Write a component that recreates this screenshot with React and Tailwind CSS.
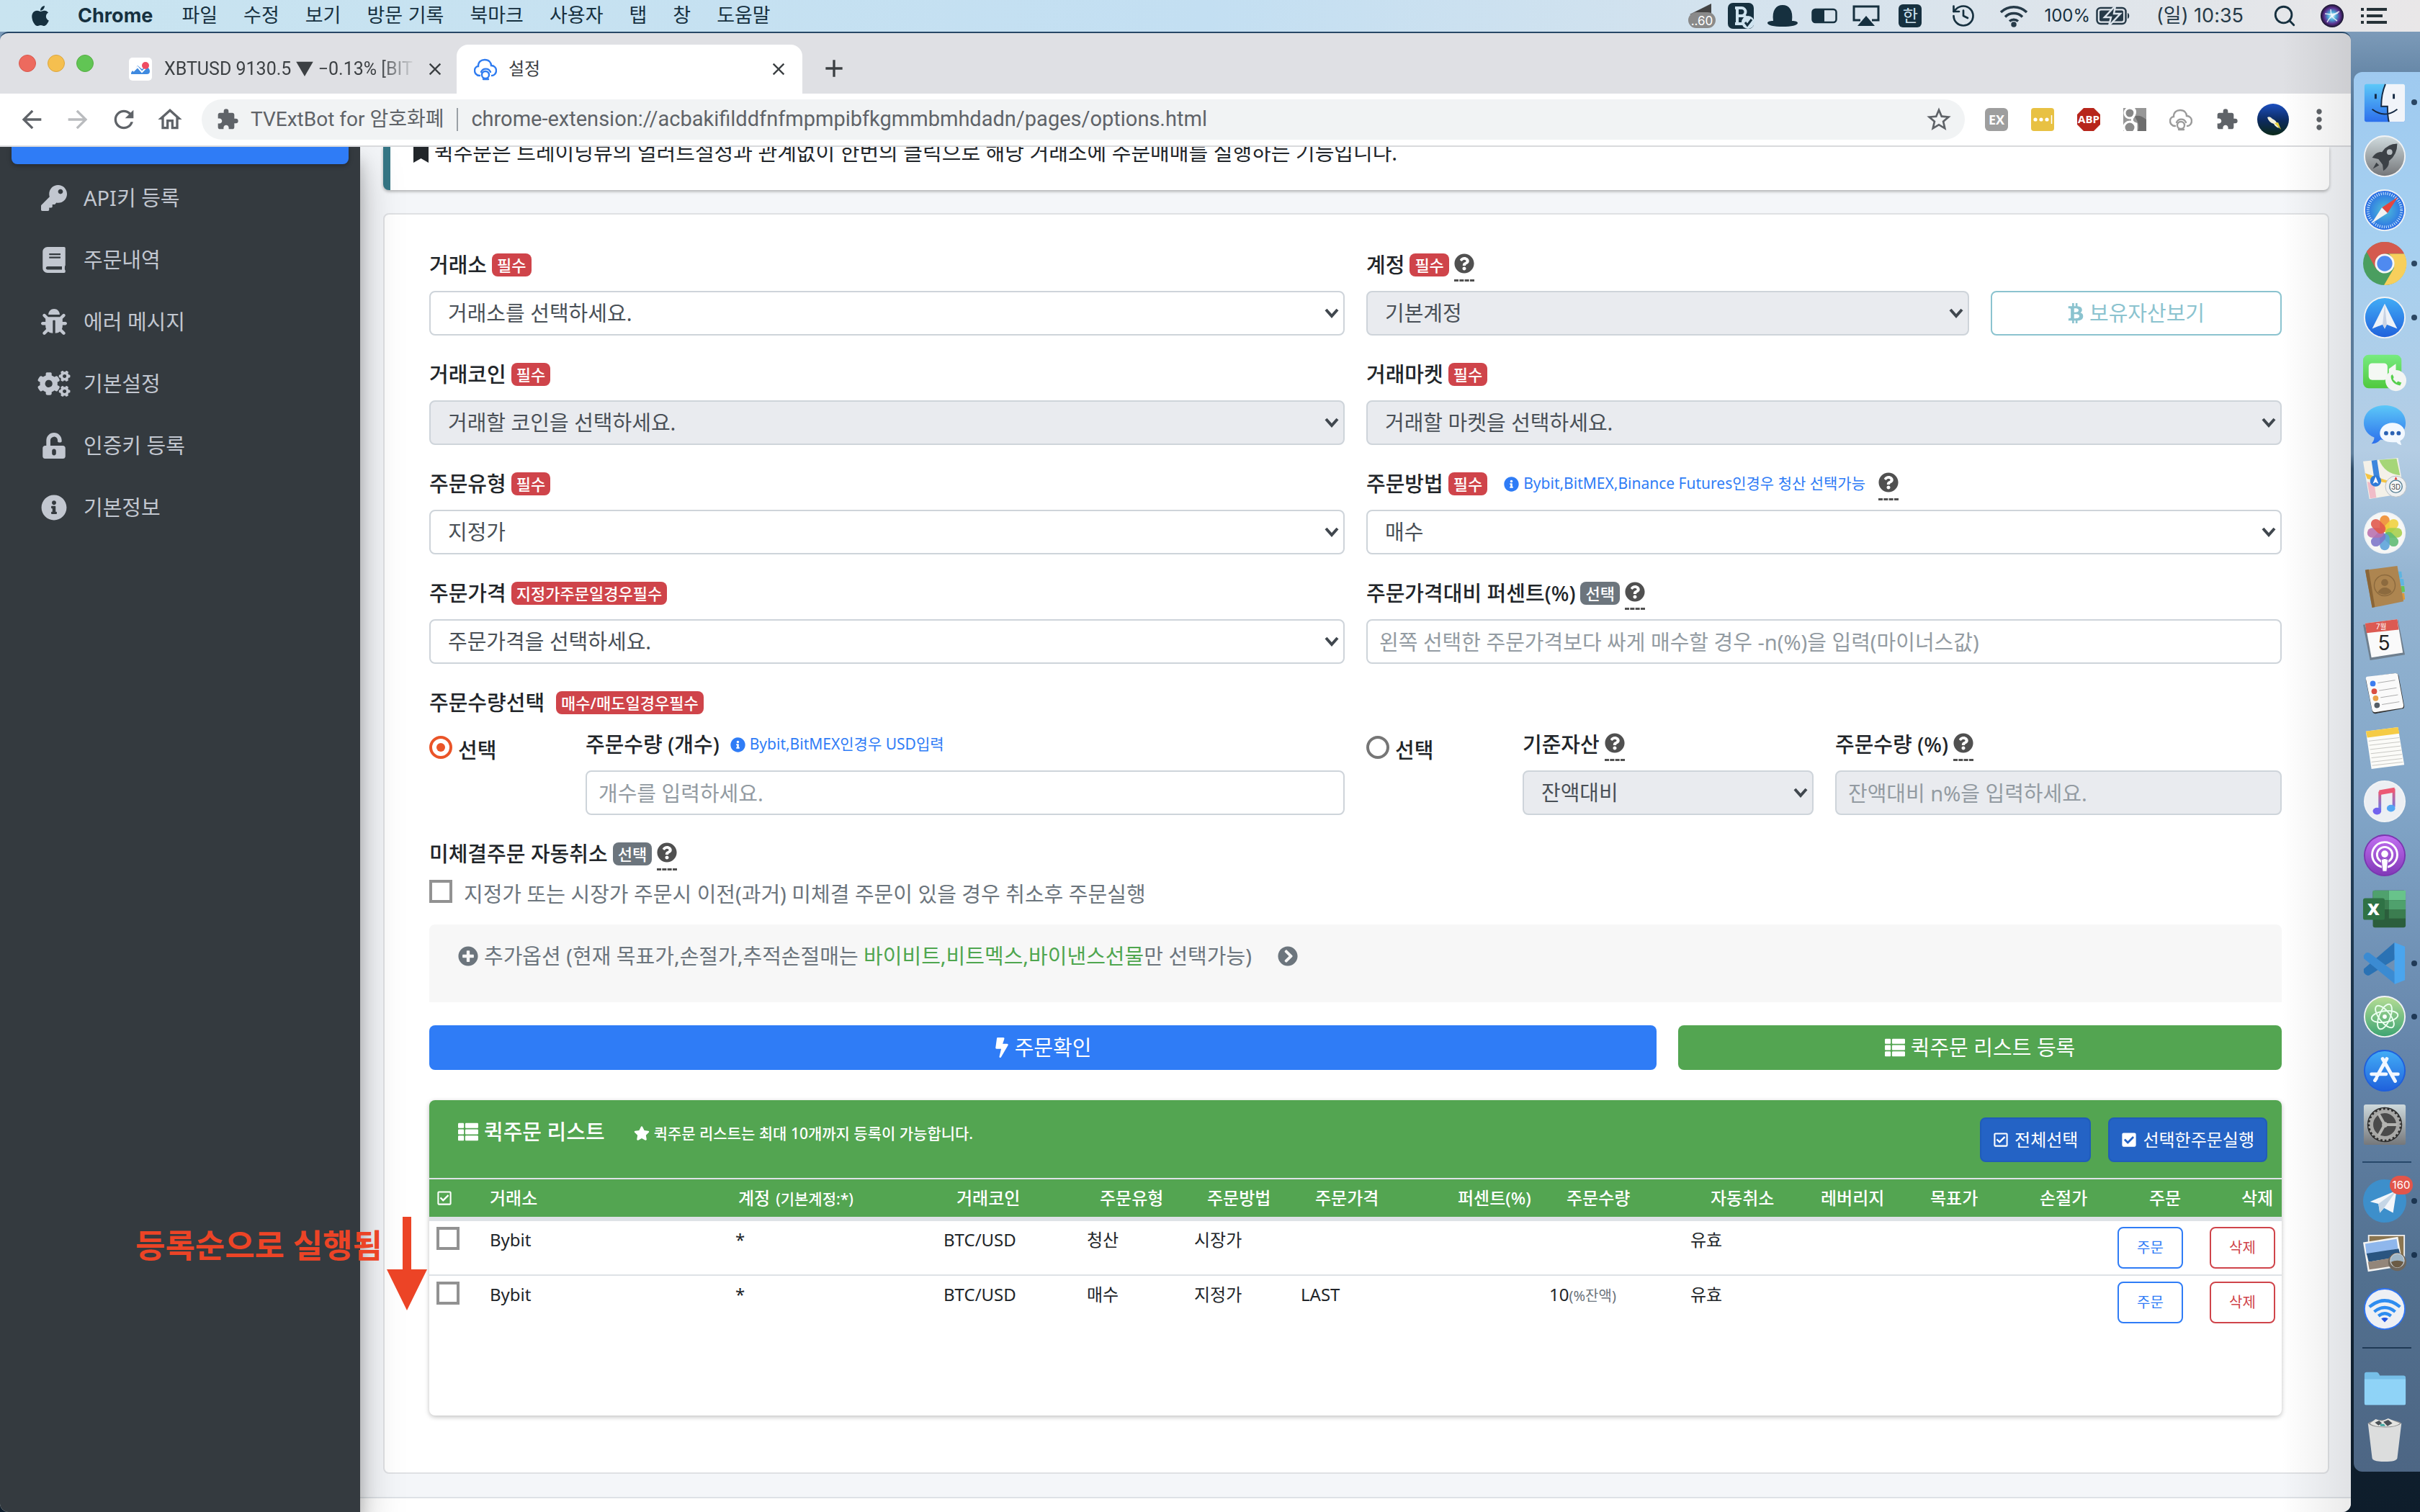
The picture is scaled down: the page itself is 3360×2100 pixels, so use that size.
import React from "react";
import {
  FaApple, FaKey, FaBook, FaBug, FaCogs, FaUnlockAlt, FaInfoCircle, FaBookmark, FaQuestionCircle, FaBtc,
  FaBolt, FaThList, FaStar, FaRegCheckSquare, FaCheckSquare, FaPlusCircle, FaChevronCircleRight,
} from "react-icons/fa";
import { MdArrowBack, MdArrowForward, MdRefresh, MdOutlineHome, MdExtension, MdStarBorder, MdMoreVert, MdClose, MdAdd } from "react-icons/md";
import { History, Search } from "lucide-react";

/* ---------- menu bar ---------- */

const MENUS = ["파일", "수정", "보기", "방문 기록", "북마크", "사용자", "탭", "창", "도움말"];

function MenuBar() {
  return (
    <header className="flex h-11 shrink-0 items-center bg-linear-to-r from-[#c9e4f0] via-[#c3dff2] to-[#e9e7e8] pl-10 pr-[46px] font-['Inter','Noto_Sans_CJK_KR',sans-serif] text-[27px] text-[#16303f]">
      <FaApple className="size-8" />
      <nav className="ml-9 flex items-center gap-9" aria-label="메뉴 막대">
        <span className="mr-1 text-[27px] font-bold">Chrome</span>
        {MENUS.map((m) => (
          <button key={m} className="whitespace-nowrap">{m}</button>
        ))}
      </nav>
      <div className="ml-auto flex items-center">
        <svg className="h-9 w-[38px]" viewBox="0 0 38 36">
          <path d="M2 16 32 1V16Z" fill="#444" />
          <rect x="0" y="13" width="38" height="22" rx="11" fill="#8a8a8a" />
          <text x="19" y="31" fontSize="17" fill="#fff" textAnchor="middle" fontFamily="Inter">..60</text>
        </svg>
        <svg className="ml-[17px] h-9 w-[38px]" viewBox="0 0 38 36">
          <rect x="0" y="0" width="36" height="36" rx="7" fill="#16303f" />
          <path d="M10 7h9a5 5 0 0 1 0 11h-6m0-11v22m0-11h8a5.500 5.500 0 0 1 0 11H10" fill="none" stroke="#cfe3ef" strokeWidth="4" />
          <circle cx="28" cy="27" r="9" fill="#cfe3ef" />
          <path d="m24 27 3 4 6-8" fill="none" stroke="#16303f" strokeWidth="3" />
        </svg>
        <svg className="ml-4 h-8 w-11" viewBox="0 0 44 32">
          <path d="M9 23C7 8 13 1 22 1s15 7 13 22c5 0 8 1 8 3 0 3-9 5-21 5S1 29 1 26c0-2 3-3 8-3Z" fill="#16303f" />
        </svg>
        <svg className="ml-[18px] h-6 w-9" viewBox="0 0 36 24">
          <rect x="1.500" y="3" width="33" height="18" rx="4" fill="none" stroke="#16303f" strokeWidth="2.500" />
          <path d="M5 3h13v18H5a4 4 0 0 1-4-4V7a4 4 0 0 1 4-4Z" fill="#16303f" />
        </svg>
        <svg className="ml-5 h-8 w-10" viewBox="0 0 40 32">
          <path d="M12 22H3V3h34v19h-9" fill="none" stroke="#16303f" strokeWidth="3" />
          <path d="m20 16 12 14H8Z" fill="#16303f" />
        </svg>
        <span className="ml-[25px] flex size-8 items-center justify-center rounded-md bg-[#16303f] text-[23px] leading-none text-[#cfe3ef]">한</span>
        <History className="ml-10 size-9" strokeWidth={1.8} />
        <svg className="ml-8 h-8 w-10" viewBox="0 0 40 32" fill="none" stroke="#263a48" strokeWidth="3.500">
          <path d="M2 11a26 26 0 0 1 36 0M8 17.500a17 17 0 0 1 24 0M14 23.500a9 9 0 0 1 12 0" />
          <circle cx="20" cy="28" r="2" fill="#263a48" />
        </svg>
        <span className="ml-[22px] text-[24px]">100%</span>
        <svg className="ml-2 h-7 w-12" viewBox="0 0 48 28">
          <rect x="1.500" y="3" width="40" height="22" rx="5" fill="none" stroke="#263a48" strokeWidth="2.500" />
          <rect x="5" y="6.500" width="33" height="15" rx="2" fill="#263a48" />
          <path d="M27 0 12 16h9l-3 12 16-17h-9Z" fill="#263a48" stroke="#dce4ec" strokeWidth="2.500" />
          <path d="M44 10v8c3-1 3-7 0-8Z" fill="#263a48" />
        </svg>
        <span className="ml-9 text-[27px] text-[#263a48]">(일) 10:35</span>
        <Search className="ml-10 size-[34px]" strokeWidth={2} />
        <svg className="ml-[33px] size-8" viewBox="0 0 32 32">
          <defs>
            <radialGradient id="siri">
              <stop offset="0" stopColor="#e8fbff" /><stop offset=".35" stopColor="#4aa9d8" /><stop offset=".7" stopColor="#5b2f8e" /><stop offset="1" stopColor="#141329" />
            </radialGradient>
          </defs>
          <circle cx="16" cy="16" r="16" fill="url(#siri)" />
          <path d="M6 13c8 1 12 2 20-3M9 25c4-8 8-10 15-13M14 7c0 8 2 12 9 16" stroke="#fff" strokeWidth="1.500" fill="none" opacity=".8" />
        </svg>
        <svg className="ml-6 h-6 w-9" viewBox="0 0 36 24" fill="#263238">
          <path d="M0 1h4v4H0zM8 1h28v4H8zM0 10h4v4H0zM8 10h22v4H8zM0 19h4v4H0zM8 19h28v4H8z" />
        </svg>
      </div>
    </header>
  );
}

/* ---------- browser chrome ---------- */

function CloudBot({ className }) {
  return (
    <svg className={className} viewBox="0 0 32 32" fill="none" stroke="currentColor" strokeWidth="2.400" strokeLinecap="round">
      <path d="M8 25C3 25 1 21 1 18c0-4 3-6 5-6C6 6 10 3 15 3c6 0 9 4 9 8 4 0 7 3 7 7 0 4-3 7-6 7" />
      <path d="M10 20a7 7 0 0 1 13 0" />
      <circle cx="16" cy="24" r="5" />
      <path d="M13 30h7" />
    </svg>
  );
}

function TabStrip() {
  return (
    <div className="flex h-[84px] shrink-0 items-end bg-[#dfe0e4] pl-[26px]">
      <div className="mb-[30px] flex gap-4">
        <span className="size-6 rounded-full border border-[#d8584d] bg-[#ed6a5e]" />
        <span className="size-6 rounded-full border border-[#dba63f] bg-[#f5bf4f]" />
        <span className="size-6 rounded-full border border-[#55ad42] bg-[#61c554]" />
      </div>
      <div className="ml-[49px] flex h-[68px] w-[455px] items-center font-['Roboto','Noto_Sans_CJK_KR',sans-serif] text-[25px] text-[#3c4043]">
        <svg className="size-8 shrink-0" viewBox="0 0 32 32">
          <rect width="32" height="32" rx="5" fill="#fff" />
          <path d="M3 23c0-4 2-5 4-5l5-7 6 5 6-3c4 1 5 4 5 6 0 3-2 4-4 4H6c-2 0-3 0-3 0Z" fill="#3f8ae0" />
          <path d="m6 19 6-6 6 7 6-6" stroke="#fff" strokeWidth="2" fill="none" />
          <circle cx="23" cy="11" r="5" fill="#ee4c62" />
        </svg>
        <span className="ml-[17px] w-[350px] whitespace-nowrap mask-r-from-85%">XBTUSD 9130.5 ▼ −0.13% [BIT</span>
        <button aria-label="탭 닫기" className="ml-3"><MdClose className="size-7" /></button>
      </div>
      <div className="flex h-[68px] w-[480px] items-center rounded-t-2xl bg-white pl-6 pr-[19px] font-['Roboto','Noto_Sans_CJK_KR',sans-serif] text-[24px] text-[#3c4043]">
        <CloudBot className="size-8 text-[#2f7cf0]" />
        <span className="ml-4">설정</span>
        <button aria-label="탭 닫기" className="ml-auto"><MdClose className="size-7" /></button>
      </div>
      <button aria-label="새 탭" className="mb-[15px] ml-6 text-[#3c4043]"><MdAdd className="size-10" /></button>
    </div>
  );
}

function Toolbar() {
  return (
    <div className="flex h-[74px] shrink-0 items-center border-b-2 border-[#d9dadd] bg-white pl-6 pr-7 text-[#5f6368]">
      <button aria-label="뒤로" className="w-16"><MdArrowBack className="size-10" /></button>
      <button aria-label="앞으로" className="w-16 text-[#b9bbbe]"><MdArrowForward className="size-10" /></button>
      <button aria-label="새로고침" className="w-16"><MdRefresh className="size-10" /></button>
      <button aria-label="홈" className="w-16"><MdOutlineHome className="size-10" /></button>
      <div className="flex h-14 grow items-center rounded-full bg-[#f1f3f4] pl-5 pr-4 font-['Roboto','Noto_Sans_CJK_KR',sans-serif] text-[29px]">
        <MdExtension className="size-8 shrink-0" />
        <span className="ml-4 whitespace-nowrap text-[28px]">TVExtBot for 암호화폐</span>
        <span className="mx-[18px] h-8 w-[2px] bg-[#9aa0a6]" />
        <input
          aria-label="주소창"
          className="min-w-0 grow bg-transparent outline-none"
          defaultValue="chrome-extension://acbakifilddfnfmpmpibfkgmmbmhdadn/pages/options.html"
        />
        <button aria-label="북마크 추가"><MdStarBorder className="size-10" /></button>
      </div>
      <div className="ml-7 flex shrink-0 items-center gap-8">
        <span className="flex size-8 items-center justify-center rounded-md bg-[#9e9e9e] font-['Open_Sans',sans-serif] text-[18px] font-bold text-white">EX</span>
        <svg className="size-8" viewBox="0 0 32 32"><rect width="32" height="32" rx="4" fill="#e8c143" /><circle cx="6" cy="16" r="2.600" fill="#fff" /><circle cx="14" cy="16" r="2.600" fill="#fff" /><circle cx="22" cy="16" r="2.600" fill="#fff" /><path d="M28.500 10v12" stroke="#fff" strokeWidth="1.500" /></svg>
        <svg className="size-8" viewBox="0 0 32 32">
          <path d="M9 0h14l9 9v14l-9 9H9l-9-9V9Z" fill="#b7261b" />
          <text x="16" y="21" fontSize="15" fontWeight="700" fill="#fff" textAnchor="middle" fontFamily="Open Sans">ABP</text>
        </svg>
        <svg className="size-8" viewBox="0 0 32 32">
          <rect width="32" height="32" fill="#979797" /><path d="M16 12q6-4 16 4v16H20q4-8-4-20Z" fill="#6d6d6d" />
          <circle cx="9" cy="7" r="7" fill="#888" stroke="#fff" strokeWidth="3" /><circle cx="9" cy="27" r="8" fill="#8b8b8b" stroke="#fff" strokeWidth="3" />
          <path d="M14 0q5 5 0 12t4 10v10" stroke="#fff" strokeWidth="3" fill="none" />
        </svg>
        <CloudBot className="size-8 text-[#9b9b9b]" />
        <MdExtension className="size-8" />
        <svg className="-mx-[6px] size-11" viewBox="0 0 44 44">
          <defs><linearGradient id="ava" x2="0" y2="1"><stop offset="0" stopColor="#1c4fc0" /><stop offset=".55" stopColor="#0c2a5c" /><stop offset="1" stopColor="#0c2a18" /></linearGradient></defs>
          <circle cx="22" cy="22" r="22" fill="url(#ava)" />
          <path d="M14 19q4-2 7 2 5 2 7 7l2 6q-5-2-7-6-7-2-9-9Z" fill="#f4f1dc" /><path d="m24 27 9 9-4-10Z" fill="#e9d23c" />
        </svg>
        <button aria-label="메뉴" className="-mx-[6px]"><MdMoreVert className="size-11" /></button>
      </div>
    </div>
  );
}

/* ---------- options page ---------- */

const NAV = [
  { icon: FaKey, label: "API키 등록" },
  { icon: FaBook, label: "주문내역" },
  { icon: FaBug, label: "에러 메시지" },
  { icon: FaCogs, label: "기본설정", wide: true },
  { icon: FaUnlockAlt, label: "인증키 등록" },
  { icon: FaInfoCircle, label: "기본정보" },
];

function Sidebar() {
  return (
    <aside className="z-10 w-[500px] shrink-0 bg-[#343a3f] px-4 text-[#c2c7d0] shadow-[0_28px_56px_rgba(0,0,0,.25),0_20px_20px_rgba(0,0,0,.22)]">
      <div className="h-6 rounded-b-lg bg-[#2f7cf6] shadow-[0_2px_6px_rgba(0,0,0,.3)]" />
      <nav className="mt-1" aria-label="사이드바">
        {NAV.map(({ icon: Icon, label, wide }) => (
          <a key={label} href="#" className="flex h-[86px] items-center pl-8">
            <span className="flex w-[54px] justify-center">
              <Icon className={wide ? "h-9 w-[46px]" : "size-9"} />
            </span>
            <span className="ml-[14px]">{label}</span>
          </a>
        ))}
      </nav>
    </aside>
  );
}

function Badge({ gray, children }) {
  return (
    <span className={"flex h-8 items-center whitespace-nowrap rounded-lg px-[7px] text-[22px] font-medium text-white " + (gray ? "bg-[#6c757d]" : "bg-[#cf444a]")}>
      {children}
    </span>
  );
}

function Help() {
  return (
    <button type="button" aria-label="도움말" className="self-start border-b-[3px] border-dashed border-[#505050] pb-2 text-[#505050]">
      <FaQuestionCircle className="size-7" />
    </button>
  );
}

function Info({ children }) {
  return (
    <span className="flex items-center gap-[6px] whitespace-nowrap text-[21px] text-[#2f7cf6]">
      <FaInfoCircle className="size-[21px]" />
      {children}
    </span>
  );
}

function LabelRow({ id, text, children }) {
  return (
    <div className="mb-5 flex h-8 items-center gap-[7px] text-[#212529]">
      <label htmlFor={id} className="whitespace-nowrap font-medium">{text}</label>
      {children}
    </div>
  );
}

function SelectBox({ id, value, disabled }) {
  return (
    <div className="relative">
      <select
        id={id}
        disabled={disabled}
        className="h-[62px] w-full appearance-none rounded-lg border-2 border-[#ced4da] bg-white pl-6 pr-10 text-[#495057] opacity-100 disabled:bg-[#e9ebef]"
      >
        <option>{value}</option>
      </select>
      <svg className="pointer-events-none absolute right-2 top-6 h-[14px] w-5" viewBox="0 0 20 14">
        <path d="m2 2 8 9 8-9" fill="none" stroke="#40474e" strokeWidth="4" />
      </svg>
    </div>
  );
}

const INPUT = "h-[62px] w-full rounded-lg border-2 border-[#ced4da] bg-white px-4 placeholder:text-[#939ba2] disabled:bg-[#e9ebef]";

function SelectField({ id, label, value, disabled, badge = "필수", extra }) {
  return (
    <div>
      <LabelRow id={id} text={label}>
        <Badge>{badge}</Badge>
        {extra}
      </LabelRow>
      <SelectBox id={id} value={value} disabled={disabled} />
    </div>
  );
}

function Radio({ id, checked }) {
  return (
    <div className="mt-1 flex w-[217px] shrink-0 items-start gap-2">
      <input
        id={id}
        type="radio"
        name="qty"
        defaultChecked={checked}
        className="size-8 appearance-none rounded-full border-4 border-[#767676] bg-white p-[6px] checked:border-[#ea5428] checked:bg-[#ea5428] checked:bg-clip-content"
      />
      <label htmlFor={id} className="font-medium leading-10">선택</label>
    </div>
  );
}

function OrderForm() {
  return (
    <form onSubmit={(e) => e.preventDefault()}>
      <div className="grid grid-cols-2 gap-x-[30px] gap-y-[38px]">
        <SelectField id="exchange" label="거래소" value="거래소를 선택하세요." />
        <div className="flex items-end gap-[30px]">
          <div className="grow"><SelectField id="account" label="계정" value="기본계정" disabled extra={<Help />} /></div>
          <button type="button" className="flex h-[62px] w-[404px] items-center justify-center gap-2 rounded-lg border-2 border-[#8bc3cf] text-[#8bc3cf]">
            <FaBtc className="h-7 w-[22px]" />보유자산보기
          </button>
        </div>
        <SelectField id="coin" label="거래코인" value="거래할 코인을 선택하세요." disabled />
        <SelectField id="market" label="거래마켓" value="거래할 마켓을 선택하세요." disabled />
        <SelectField id="type" label="주문유형" value="지정가" />
        <SelectField
          id="side" label="주문방법" value="매수"
          extra={<div className="ml-4 flex h-8 items-center gap-[18px]"><Info>Bybit,BitMEX,Binance Futures인경우 청산 선택가능</Info><Help /></div>}
        />
        <SelectField id="price" label="주문가격" badge="지정가주문일경우필수" value="주문가격을 선택하세요." />
        <div>
          <LabelRow id="percent" text="주문가격대비 퍼센트(%)"><Badge gray>선택</Badge><Help /></LabelRow>
          <input id="percent" className={INPUT} placeholder="왼쪽 선택한 주문가격보다 싸게 매수할 경우 -n(%)을 입력(마이너스값)" />
        </div>
      </div>

      <div className="mt-[38px] flex h-8 items-center gap-4 font-medium">
        주문수량선택
        <Badge>매수/매도일경우필수</Badge>
      </div>
      <div className="mt-[26px] grid grid-cols-2 gap-x-[30px]">
        <div className="flex">
          <Radio id="by-count" checked />
          <div className="grow">
            <LabelRow id="count" text="주문수량 (개수)"><span className="ml-2"><Info>Bybit,BitMEX인경우 USD입력</Info></span></LabelRow>
            <input id="count" className={INPUT} placeholder="개수를 입력하세요." />
          </div>
        </div>
        <div className="flex">
          <Radio id="by-percent" />
          <div className="mr-[30px] w-[404px]">
            <LabelRow id="asset" text="기준자산"><Help /></LabelRow>
            <SelectBox id="asset" value="잔액대비" disabled />
          </div>
          <div className="grow">
            <LabelRow id="ratio" text="주문수량 (%)"><Help /></LabelRow>
            <input id="ratio" disabled className={INPUT} placeholder="잔액대비 n%을 입력하세요." />
          </div>
        </div>
      </div>

      <div className="mt-[38px]">
        <LabelRow id="cancel" text="미체결주문 자동취소"><Badge gray>선택</Badge><Help /></LabelRow>
      </div>
      <label className="flex h-8 items-start gap-4 text-[#6c757d]">
        <input id="cancel" type="checkbox" className="size-8 appearance-none border-4 border-[#929292] bg-white" />
        <span className="leading-10">지정가 또는 시장가 주문시 이전(과거) 미체결 주문이 있을 경우 취소후 주문실행</span>
      </label>

      <button type="button" className="mt-[30px] flex h-[108px] w-full items-start rounded-t-lg bg-[#f7f7f7] pl-10 pt-6 text-left text-[#6c757d]">
        <span className="flex items-center leading-10">
          <FaPlusCircle className="mr-2 size-7" />
          추가옵션 (현재 목표가,손절가,추적손절매는&nbsp;
          <span className="text-[#4fa64f]">바이비트,비트멕스,바이낸스선물</span>만 선택가능)
          <FaChevronCircleRight className="ml-9 size-7" />
        </span>
      </button>

      <div className="mt-8 flex gap-[30px] text-white">
        <button className="flex h-[62px] w-[1704px] items-center justify-center gap-2 rounded-lg bg-[#2f7cf6]">
          <FaBolt className="h-7 w-5" />주문확인
        </button>
        <button type="button" className="flex h-[62px] grow items-center justify-center gap-2 rounded-lg bg-[#53a551]">
          <FaThList className="size-7" />퀵주문 리스트 등록
        </button>
      </div>
    </form>
  );
}

const COLS = [
  { w: "w-[72px]", th: "pl-[10px]" },
  { w: "w-[341px]", th: "pl-3", label: "거래소", key: "exchange" },
  { w: "w-[289px]", th: "pl-4", label: "계정", small: "(기본계정:*)", key: "account" },
  { w: "w-[199px]", th: "pl-[30px]", label: "거래코인", key: "coin" },
  { w: "w-[149px]", th: "pl-[30px]", label: "주문유형", key: "type" },
  { w: "w-[148px]", th: "pl-[30px]", label: "주문방법", key: "side" },
  { w: "w-[198px]", th: "pl-8", label: "주문가격", key: "price" },
  { w: "w-[147px]", th: "pl-8", label: "퍼센트(%)", key: "percent" },
  { w: "w-[196px]", th: "pl-9", label: "주문수량", key: "qty" },
  { w: "w-[161px]", th: "pl-10", label: "자동취소", key: "cancel" },
  { w: "w-[152px]", th: "pl-8", label: "레버리지", key: "lev" },
  { w: "w-[152px]", th: "pl-8", label: "목표가", key: "target" },
  { w: "w-[128px]", th: "pl-8", label: "손절가", key: "stop" },
  { w: "w-[128px]", th: "pl-14", label: "주문" },
  { w: "w-[112px]", th: "pl-14", label: "삭제" },
];

const ROWS = [
  { exchange: "Bybit", account: "*", coin: "BTC/USD", type: "청산", side: "시장가", cancel: "유효" },
  { exchange: "Bybit", account: "*", coin: "BTC/USD", type: "매수", side: "지정가", price: "LAST", qty: "10", unit: "(%잔액)", cancel: "유효" },
];

function QuickList() {
  return (
    <section className="mt-[42px] h-[438px] overflow-hidden rounded-lg bg-white shadow-[0_2px_6px_rgba(0,0,0,.25)]">
      <div className="flex h-[108px] items-start bg-[#53a551] pl-10 pr-5 text-white">
        <h2 className="mt-6 flex items-center gap-2 font-medium leading-10"><FaThList className="size-7" />퀵주문 리스트</h2>
        <p className="ml-10 mt-[26px] flex items-center gap-[6px] text-[21px] font-medium leading-10"><FaStar className="size-[22px]" />퀵주문 리스트는 최대 10개까지 등록이 가능합니다.</p>
        <div className="ml-auto mt-6 flex gap-6 text-[24px]">
          <button className="flex h-[62px] items-center gap-2 whitespace-nowrap rounded-lg border-2 border-[#205cb8] bg-[#2463c5] px-4"><FaRegCheckSquare className="size-[22px]" />전체선택</button>
          <button className="flex h-[62px] items-center gap-2 whitespace-nowrap rounded-lg border-2 border-[#205cb8] bg-[#2463c5] px-4"><FaCheckSquare className="size-[22px]" />선택한주문실행</button>
        </div>
      </div>
      <table className="w-full table-fixed border-separate border-spacing-0 text-left text-[24px] text-[#212529]">
        <thead>
          <tr className="bg-[#53a551] text-white">
            {COLS.map((c, i) => (
              <th key={i} scope="col" className={c.w + " " + c.th + " h-[60px] whitespace-nowrap border-b-[6px] border-t-2 border-[#dee2e6] font-medium"}>
                {c.label || <FaRegCheckSquare className="size-[22px]" aria-label="선택" />}
                {c.small && <span className="ml-2 text-[21px]">{c.small}</span>}
              </th>
            ))}
          </tr>
        </thead>
        <tbody>
          {ROWS.map((r, i) => (
            <tr key={i} className="group h-[76px] align-top">
              <td className="border-[#dee2e6] pl-[10px] pt-2 group-first:border-b-2">
                <input type="checkbox" aria-label={"주문 " + (i + 1) + " 선택"} className="block size-8 appearance-none border-4 border-[#929292] bg-white" />
              </td>
              {COLS.slice(1, 13).map((c) => (
                <td key={c.key} className="whitespace-nowrap border-[#dee2e6] pl-3 pt-2 leading-9 group-first:border-b-2">
                  {r[c.key]}
                  {c.key === "qty" && <span className="text-[20px] text-[#6c757d]">{r.unit}</span>}
                </td>
              ))}
              <td className="border-[#dee2e6] pl-3 pt-2 group-first:border-b-2">
                <button className="block h-[58px] w-[91px] rounded-lg border-2 border-[#2f7cf6] text-[20px] text-[#2f7cf6]">주문</button>
              </td>
              <td className="border-[#dee2e6] pl-3 pt-2 group-first:border-b-2">
                <button className="block h-[58px] w-[91px] rounded-lg border-2 border-[#cf444a] text-[20px] text-[#cf444a]">삭제</button>
              </td>
            </tr>
          ))}
        </tbody>
      </table>
    </section>
  );
}

function Page() {
  return (
    <div className="relative flex min-h-0 flex-1 overflow-hidden bg-[#f4f6f9] font-['Noto_Sans','Noto_Sans_CJK_KR',sans-serif] text-[29px] text-[#212529]">
      <Sidebar />
      <main className="min-w-0 grow">
        <div className="ml-8 mr-[30px] h-[60px] overflow-hidden rounded-b-lg border-l-[10px] border-[#357685] bg-white pl-8 shadow-[0_2px_4px_rgba(0,0,0,.3)]">
          <p className="-mt-3 flex items-center gap-2 whitespace-nowrap leading-10">
            <FaBookmark className="h-7 w-[21px]" />
            퀵주문은 트레이딩뷰의 얼러트설정과 관계없이 한번의 클릭으로 해당 거래소에 주문매매를 실행하는 기능입니다.
          </p>
        </div>
        <div className="mb-8 ml-8 mr-[30px] mt-8 rounded-lg border-2 border-[#dfe1e4] bg-white pb-[79px] pl-[62px] pr-16 pt-[54px]">
          <OrderForm />
          <QuickList />
        </div>
        <footer className="h-20 border-t-2 border-[#dee2e6] bg-white" />
      </main>
      <div className="absolute left-[188px] top-[1486px] z-20 flex items-start text-[#ec4426]">
        <span className="w-[349px] whitespace-nowrap text-[45px] font-bold leading-[80px]">등록순으로 실행됨</span>
        <svg className="h-[130px] w-[56px]" viewBox="0 0 56 130"><path d="M22 0h12v73h22L28 130 0 73h22Z" fill="currentColor" /></svg>
      </div>
    </div>
  );
}

/* ---------- dock ---------- */

const Round = ({ fill, ring = "#f1f3f5", children }) => (
  <>
    <circle cx="32" cy="32" r="30" fill={ring} />
    <circle cx="32" cy="32" r="28" fill={fill} />
    {children}
  </>
);

const PETALS = ["#ef8b2c", "#f0d23c", "#a6cf4a", "#5dbb72", "#5aa2da", "#7b74c8", "#b86fae", "#e0574a"];

const APPS = [
  { name: "Finder", run: true, art: (
    <><rect x="3" y="6" width="58" height="54" rx="3" fill="url(#dBlue)" /><path d="M33 6h25a3 3 0 0 1 3 3v48a3 3 0 0 1-3 3H38q-2-8-2-22h-9q0-18 6-32Z" fill="#f1f4f9" /><path d="M19 20v7M45 20v7" stroke="#152a44" strokeWidth="3" /><path d="M14 42q18 14 36 0M33 6q-6 14-6 32h9q0 14 2 22" fill="none" stroke="#152a44" strokeWidth="2" /></>
  ) },
  { name: "Launchpad", art: (
    <Round fill="url(#dGray)"><path d="M50 14q-14 0-22 12-8-1-14 8l9 2 6 8 1 9q9-6 8-14 12-9 12-25Z" fill="#3c4146" /><circle cx="39" cy="26" r="4" fill="#b8bec2" /><path d="m20 41-5 9 9-5Z" fill="#3c4146" /></Round>
  ) },
  { name: "Safari", art: (
    <Round fill="url(#dSafari)"><circle cx="32" cy="32" r="24" fill="none" stroke="#dcefff" strokeWidth="4" strokeDasharray="1 2.140" /><path d="M51 13 36 36l-8-8Z" fill="#e5463e" /><path d="M13 51 28 28l8 8Z" fill="#f2f2f2" /></Round>
  ) },
  { name: "Chrome", run: true, art: (
    <><circle cx="32" cy="32" r="31" fill="#4a9e60" /><path d="M32 1a31 31 0 0 1 28 17H32L19 39 6 15A31 31 0 0 1 32 1Z" fill="#d45a4e" /><path d="M60 18a31 31 0 0 1-29 45l14-24q3-12-7-21Z" fill="#f7cf5c" /><circle cx="32" cy="32" r="14" fill="#f6f6f6" /><circle cx="32" cy="32" r="11" fill="#4f8af0" /></>
  ) },
  { name: "Spark", run: true, art: <Round fill="url(#dBlue2)"><path d="m32 12 18 36-15-6-3 6-3-6-15 6Z" fill="#eef2f8" /><path d="m32 12 3 30-3 6-3-6Z" fill="#c8d3e4" /></Round> },
  { name: "FaceTime", art: (
    <><rect x="1" y="8" width="55" height="48" rx="8" fill="url(#dGreen)" /><rect x="9" y="20" width="27" height="24" rx="5" fill="#f4f8f4" /><path d="m38 28 10-7v22l-10-7Z" fill="#f4f8f4" /><circle cx="48" cy="45" r="15" fill="#f3f5f3" /><path d="M41 38c-1 7 5 13 13 14l2-4-5-2-2 2-5-5 1-3-2-4Z" fill="#56cf4c" /></>
  ) },
  { name: "메시지", art: (
    <><path d="M32 3c17 0 30 10 30 25S49 53 32 53l-6-1q-5 6-13 6 4-4 4-9C7 45 2 37 2 28 2 13 15 3 32 3Z" fill="url(#dBlue)" /><path d="M43 28c10 0 18 6 18 15 0 5-3 9-7 11l2 6q-5-1-7-4h-6c-10 0-18-5-18-13s8-15 18-15Z" fill="#f2f8ff" /><circle cx="34" cy="43" r="3" fill="#2b62b4" /><circle cx="43" cy="43" r="3" fill="#2b62b4" /><circle cx="52" cy="43" r="3" fill="#2b62b4" /></>
  ) },
  { name: "지도", art: (
    <><path d="m1 7 50-5 9 51-50 8Z" fill="#f4f1e8" /><path d="m24 5 25-2 5 24q-22-2-30-22Z" fill="#a5d678" /><path d="m4 24 42 14 8-2-1 6-46-10Z" fill="#f4c544" /><path d="m13 6 8-1 4 26-8 1Z" fill="#3d87dd" /><path d="m7 36 10 3 3 20-9 1Z" fill="#f0bcc8" /><circle cx="19" cy="35" r="8" fill="#2f7bd8" /><path d="m19 29 4 10-4-2-4 2Z" fill="#fff" /><circle cx="48" cy="43" r="15" fill="#eef0f1" stroke="#b9bfc4" strokeWidth="1" /><circle cx="48" cy="43" r="9" fill="#f8f8f8" stroke="#567f94" strokeWidth="1.500" /><text x="48" y="47" fontSize="10" textAnchor="middle" fill="#444" fontFamily="Inter">3D</text><path d="m48 29 2 4h-4Z" fill="#e5372f" /></>
  ) },
  { name: "사진", art: (
    <Round fill="#f7f7f5">{PETALS.map((c, i) => <rect key={c} x="25" y="7" width="14" height="24" rx="7" fill={c} opacity=".88" transform={`rotate(${i * 45} 32 32)`} />)}</Round>
  ) },
  { name: "연락처", art: (
    <><path d="m50 10 6 0 1 8-4 2zM53 20l6 1 1 9-5 0z" fill="#5fb5e0" /><path d="m55 31 5 0 1 8-5 1z" fill="#62c85b" /><path d="m56 41 4 0 1 9-5 1z" fill="#e09a38" /><path d="m4 8 46-6 9 51-45 9Z" fill="#ad8550" /><path d="m4 8 5-1 9 54-4 1Z" fill="#8a6537" /><circle cx="32" cy="30" r="15" fill="none" stroke="#8c6a3e" strokeWidth="1.500" /><circle cx="32" cy="26" r="5" fill="#8c6a3e" /><path d="M22 40q4-7 10-7t10 6q-8 8-20 1Z" fill="#8c6a3e" /></>
  ) },
  { name: "캘린더", art: (
    <><path d="m1 10 50-7 10 50-50 8Z" fill="#6f7f8e" /><path d="m4 8 46-6 8 48-45 7Z" fill="#fafafa" /><path d="m4 8 46-6 2 15-46 5Z" fill="#dc5a52" /><text x="27" y="16" fontSize="10" fill="#fff" textAnchor="middle" fontFamily="Inter, Noto Sans CJK KR">7월</text><text x="31" y="46" fontSize="29" fill="#222" textAnchor="middle" fontFamily="Inter">5</text></>
  ) },
  { name: "미리 알림", art: (
    <><path d="m7 8 40-6q4 0 5 4l8 43q0 4-3 4l-38 7q-4 0-5-4L5 12q0-3 2-4Z" fill="#333" /><path d="m7 7 40-5q4 0 4 3l8 43q0 4-3 4l-38 6q-3 0-4-3L5 10q0-3 2-3Z" fill="#fafafa" /><circle cx="15" cy="17" r="4" fill="#3c7df0" /><circle cx="17" cy="28" r="4" fill="#d94f43" /><circle cx="19" cy="38" r="4" fill="#e8a24a" /><circle cx="21" cy="48" r="4" fill="#555e66" /><path d="m22 16 25-4M24 27l25-4M26 37l25-4M28 47l25-4" stroke="#aaa" strokeWidth="1" /></>
  ) },
  { name: "메모", art: (
    <><path d="m5 8 46-6 9 54-47 6Z" fill="#fbfbf8" /><path d="m5 8 46-6 2 9-46 6Z" fill="#f5cb45" /><path d="m9 22 44-5M10 28l44-5M11 34l44-5M12 40l44-5M13 46l44-5M13 52l44-5M14 57l44-5" stroke="#c6c6c2" strokeWidth="1" /></>
  ) },
  { name: "음악", art: (
    <Round fill="#eceff3"><path d="M25 18v27M45 14v26M24 20l22-4" stroke="url(#dMusic)" strokeWidth="4" fill="none" /><path d="M24 16 46 12v7L24 23Z" fill="#ec5a74" /><ellipse cx="21" cy="46" rx="6" ry="5" fill="#7263ee" /><ellipse cx="41" cy="42" rx="6" ry="5" fill="#52a7f4" /></Round>
  ) },
  { name: "Podcast", art: (
    <Round fill="url(#dPurple)" ring="#7b35b0"><circle cx="32" cy="31" r="18" fill="none" stroke="#fff" strokeWidth="3" /><circle cx="32" cy="31" r="11" fill="none" stroke="#fff" strokeWidth="3" /><circle cx="32" cy="30" r="5" fill="#fff" /><path d="M27 38q5-3 10 0l-2 17h-6Z" fill="#fff" stroke="#8b44c4" strokeWidth="1" /></Round>
  ) },
  { name: "Excel", art: (
    <><rect x="15" y="5" width="47" height="53" rx="3" fill="#2b5e3c" /><path d="M15 5h23v14H15z" fill="#4fa16d" /><path d="M38 5h24v14H38z" fill="#68c38b" /><path d="M15 19h23v13H15z" fill="#3b7d50" /><path d="M38 19h24v13H38z" fill="#4fa16d" /><path d="M38 32h24v13H38z" fill="#3b7d50" /><rect x="1" y="16" width="31" height="31" rx="3" fill="#2f7245" /><text x="16" y="40" fontSize="24" fontWeight="800" fill="#fff" textAnchor="middle" fontFamily="Open Sans">X</text></>
  ) },
  { name: "VS Code", run: true, art: (
    <><path d="m46 18 1 8L10 49q-4 2-8-4v-5l44-38Z" fill="#2a72b4" /><path d="m47 62-1-18L10 17q-5-2-8 4v4Z" fill="#3b8bd2" /><path d="m46 2 15 6v48l-15 6Z" fill="#4aa5ee" /></>
  ) },
  { name: "Atom", run: true, art: (
    <Round fill="url(#dAtom)"><g fill="none" stroke="#eafff0" strokeWidth="2"><ellipse cx="32" cy="32" rx="19" ry="8" transform="rotate(-8 32 32)" /><ellipse cx="32" cy="32" rx="19" ry="8" transform="rotate(52 32 32)" /><ellipse cx="32" cy="32" rx="19" ry="8" transform="rotate(112 32 32)" /></g><circle cx="32" cy="32" r="3" fill="#fff" /></Round>
  ) },
  { name: "App Store", art: (
    <Round fill="url(#dBlue2)" ring="#1e5fdc"><path d="m35 15-14 25M29 15l18 32M13 37h21M42 37h9M20 43l-2 3" stroke="#f2f7ff" strokeWidth="5" strokeLinecap="round" /></Round>
  ) },
  { name: "시스템 환경설정", art: (
    <><rect x="2" y="3" width="60" height="58" rx="3" fill="url(#dGray)" /><circle cx="32" cy="32" r="25" fill="#2c2c2c" /><circle cx="32" cy="32" r="19" fill="#4a4a4a" stroke="#a8a8a6" strokeWidth="5" /><circle cx="32" cy="32" r="22" fill="none" stroke="#a8a8a6" strokeWidth="3" strokeDasharray="3 2.760" /><path d="M32 32h18M32 32 23 16M32 32l-9 16" stroke="#b3b3b0" strokeWidth="4" /><circle cx="32" cy="32" r="4" fill="#b3b3b0" /></>
  ) },
];

const RECENT = [
  { name: "Telegram", run: true, badge: "160", art: (
    <><circle cx="32" cy="32" r="31" fill="#3d8fcb" /><path d="m11 33 38-16-5 32-13-7-6 7-2-13Z" fill="#f2f6fa" /><path d="m23 36 26-19-18 25-6 7Z" fill="#c5d6e6" /></>
  ) },
  { name: "미리보기", run: true, art: (
    <><path d="M9 4h51v40H9z" fill="#8a7550" stroke="#eee" strokeWidth="2" /><path d="m1 14 50-8 7 42-50 8Z" fill="#f4f4f2" /><path d="m4 16 45-7 2 14-45 9Z" fill="#8fb7ec" /><path d="m6 30 46-7 3 11-46 8Z" fill="#2a5580" /><path d="m8 42 47-8 1 12-46 7Z" fill="#93867a" /><circle cx="50" cy="42" r="13" fill="#6e675d" /><circle cx="50" cy="40" r="10" fill="#9fb6c6" stroke="#ddd" strokeWidth="1" /><path d="M41 42q9-4 18 0-3 8-9 8t-9-8Z" fill="#6b5b45" /></>
  ) },
  { name: "AirPort", art: (
    <Round fill="#eef0f4" ring="#2f74f2"><g fill="none" stroke="#2f8df0" strokeWidth="4.500"><path d="M10 29q22-18 44 0" /><path d="M17 36q15-12 30 0" /><path d="M23 42q9-7 18 0" /></g><path d="M27 46q5-3 10 0l-5 5Z" fill="#2456e0" /></Round>
  ) },
];

const PLACES = [
  { name: "폴더", art: <><path d="M3 11q0-3 3-3h14q3 0 5 5h34q3 0 3 3v37q0 2-2 2H5q-2 0-2-2Z" fill="#76bfe8" /><path d="M3 18h59v34q0 3-2 3H5q-2 0-2-3Z" fill="#8fd3f7" /></> },
  { name: "휴지통", art: <><ellipse cx="32" cy="9" rx="24" ry="6" fill="#8e8f90" /><path d="m8 8 6 50q1 5 18 5t18-5l6-50q-6 6-24 6T8 8Z" fill="#dcdddd" /><path d="m11 8 8-6 9 3 9-4 9 4 8 3q-6 5-22 5T11 8Z" fill="#e4e4e1" /><path d="m18 7 6-3 4 4-5 3ZM30 6l7-3 6 5-7 4Z" fill="#4b5157" /><path d="m25 9 6 0 2 3-7 0Z" fill="#3fa7a0" /></> },
];

function DockItem({ app }) {
  return (
    <li className="flex items-center gap-[6px]">
      <span className="relative">
        <svg className="size-[62px]" viewBox="0 0 64 64" role="img" aria-label={app.name}>{app.art}</svg>
        {app.badge && (
          <span className="absolute -right-2 -top-1 flex h-[26px] w-8 items-center justify-center rounded-full bg-[#e2554a] font-['Inter',sans-serif] text-[15px] text-white">{app.badge}</span>
        )}
      </span>
      {app.run && <span className="size-2 rounded-full bg-[#0d2440]/80" />}
    </li>
  );
}

function Dock() {
  return (
    <div className="flex w-24 shrink-0 flex-col pb-14 pl-1 pt-14">
      <svg className="absolute size-0" aria-hidden="true">
        <defs>
          <linearGradient id="dBlue" x2="0" y2="1"><stop offset="0" stopColor="#5cc8f8" /><stop offset="1" stopColor="#2c6fec" /></linearGradient>
          <linearGradient id="dBlue2" x2="0" y2="1"><stop offset="0" stopColor="#42acf6" /><stop offset="1" stopColor="#2062dc" /></linearGradient>
          <linearGradient id="dGray" x2="0" y2="1"><stop offset="0" stopColor="#cfdadd" /><stop offset="1" stopColor="#75777a" /></linearGradient>
          <linearGradient id="dGreen" x2="0" y2="1"><stop offset="0" stopColor="#77eb80" /><stop offset="1" stopColor="#50c93e" /></linearGradient>
          <linearGradient id="dPurple" x2="0" y2="1"><stop offset="0" stopColor="#c06ef0" /><stop offset="1" stopColor="#8239b8" /></linearGradient>
          <linearGradient id="dAtom" x2="0" y2="1"><stop offset="0" stopColor="#b4dc94" /><stop offset="1" stopColor="#3fa573" /></linearGradient>
          <linearGradient id="dMusic" gradientUnits="userSpaceOnUse" x1="0" y1="14" x2="0" y2="46"><stop offset="0" stopColor="#ec5a74" /><stop offset="1" stopColor="#5f7cf2" /></linearGradient>
          <radialGradient id="dSafari"><stop offset="0" stopColor="#4fc0d8" /><stop offset="1" stopColor="#2a6de4" /></radialGradient>
        </defs>
      </svg>
      <div className="flex grow flex-col rounded-l-xl bg-[linear-gradient(#9fcaf0,#a6d0f0_12%,#b4cde4_27%,#95b5d2_36%,#82a6c8_52%,#6585aa_70%,#52708f_86%,#4d6684)] pb-2 pl-3 pt-[5px]">
        <ul className="grid h-[1494px] auto-rows-fr items-center">{APPS.map((a) => <DockItem key={a.name} app={a} />)}</ul>
        <hr className="mb-4 mt-[14px] w-[68px] border-t-2 border-[#27486a]" />
        <ul className="grid h-[224px] auto-rows-fr items-center">{RECENT.map((a) => <DockItem key={a.name} app={a} />)}</ul>
        <hr className="mb-5 mt-4 w-[68px] border-t-2 border-[#1f3a56]" />
        <ul className="grid h-[142px] auto-rows-fr items-center">{PLACES.map((a) => <DockItem key={a.name} app={a} />)}</ul>
      </div>
    </div>
  );
}

export default function App() {
  return (
    <div className="flex h-screen flex-col overflow-hidden bg-[linear-gradient(#8ca9c6,#4f7294_8%,#5f7f9c_30%,#2d4b66_31%,#203a52_60%,#14283a_75%,#0e1d2b)]">
      <MenuBar />
      <div className="flex min-h-0 grow">
        <div className="relative flex min-w-0 grow flex-col overflow-hidden rounded-xl border-t-2 border-[#274766]">
          <TabStrip />
          <Toolbar />
          <Page />
          <div className="pointer-events-none absolute inset-y-0 right-0 z-30 w-24 bg-linear-to-r from-transparent to-black/8" />
        </div>
        <Dock />
      </div>
    </div>
  );
}
